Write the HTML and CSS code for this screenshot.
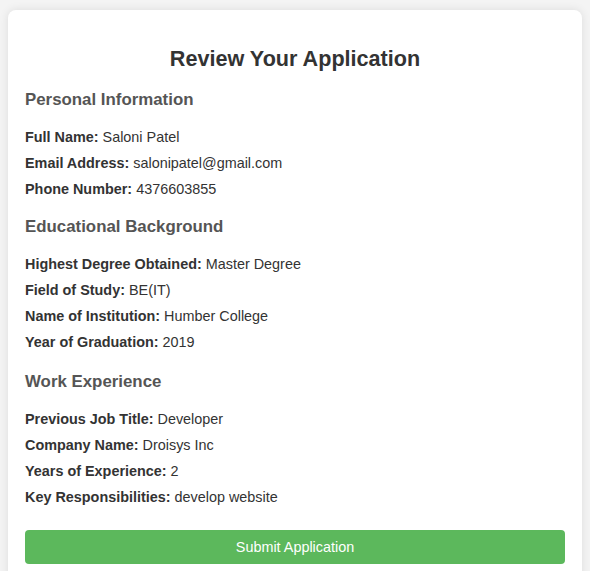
FILE: index.html
```html
<!DOCTYPE html>
<html lang="en">
<head>
<meta charset="utf-8">
<title>Review Your Application</title>
<link rel="stylesheet" href="styles.css">
</head>
<body>
<div class="card">
  <h2 class="title">Review Your Application</h2>
  <section class="section">
    <h3 class="section-title">Personal Information</h3>
    <p class="row"><strong>Full Name:</strong> Saloni Patel</p>
    <p class="row"><strong>Email Address:</strong> salonipatel@gmail.com</p>
    <p class="row"><strong>Phone Number:</strong> 4376603855</p>
  </section>
  <section class="section">
    <h3 class="section-title">Educational Background</h3>
    <p class="row"><strong>Highest Degree Obtained:</strong> Master Degree</p>
    <p class="row"><strong>Field of Study:</strong> BE(IT)</p>
    <p class="row"><strong>Name of Institution:</strong> Humber College</p>
    <p class="row"><strong>Year of Graduation:</strong> 2019</p>
  </section>
  <section class="section section-work">
    <h3 class="section-title">Work Experience</h3>
    <p class="row"><strong>Previous Job Title:</strong> Developer</p>
    <p class="row"><strong>Company Name:</strong> Droisys Inc</p>
    <p class="row"><strong>Years of Experience:</strong> 2</p>
    <p class="row"><strong>Key Responsibilities:</strong> develop website</p>
  </section>
  <button class="submit" type="button">Submit Application</button>
</div>
</body>
</html>
```
FILE: styles.css
```css
html, body {
  margin: 0;
  padding: 0;
}
body {
  background: #f4f4f4;
  font-family: "Liberation Sans", Arial, sans-serif;
  font-size: 14.4px;
  color: #333;
  padding: 10px 8px;
}
.card {
  background: #fff;
  border-radius: 8px;
  box-shadow: 0 0 10px rgba(0, 0, 0, 0.1);
  padding: 15px 17px 40px;
}
.title {
  text-align: center;
  font-size: 21.6px;
  margin: 20.5px 0 18.5px;
  color: #333;
}
.section + .section {
  margin-top: 19.5px;
}
.section + .section-work {
  margin-top: 22px;
}
.section-title {
  font-size: 16.85px;
  color: #555;
  margin: 0 0 19px;
}
.row {
  font-size: 14.4px;
  line-height: 16px;
  margin: 10px 0;
}
.row strong {
  color: #333;
}
.submit {
  display: block;
  width: 100%;
  height: 34px;
  margin-top: 25.5px;
  background: #5cb85c;
  color: #fff;
  border: none;
  border-radius: 4px;
  font-family: "Liberation Sans", Arial, sans-serif;
  font-size: 14.4px;
}
```
